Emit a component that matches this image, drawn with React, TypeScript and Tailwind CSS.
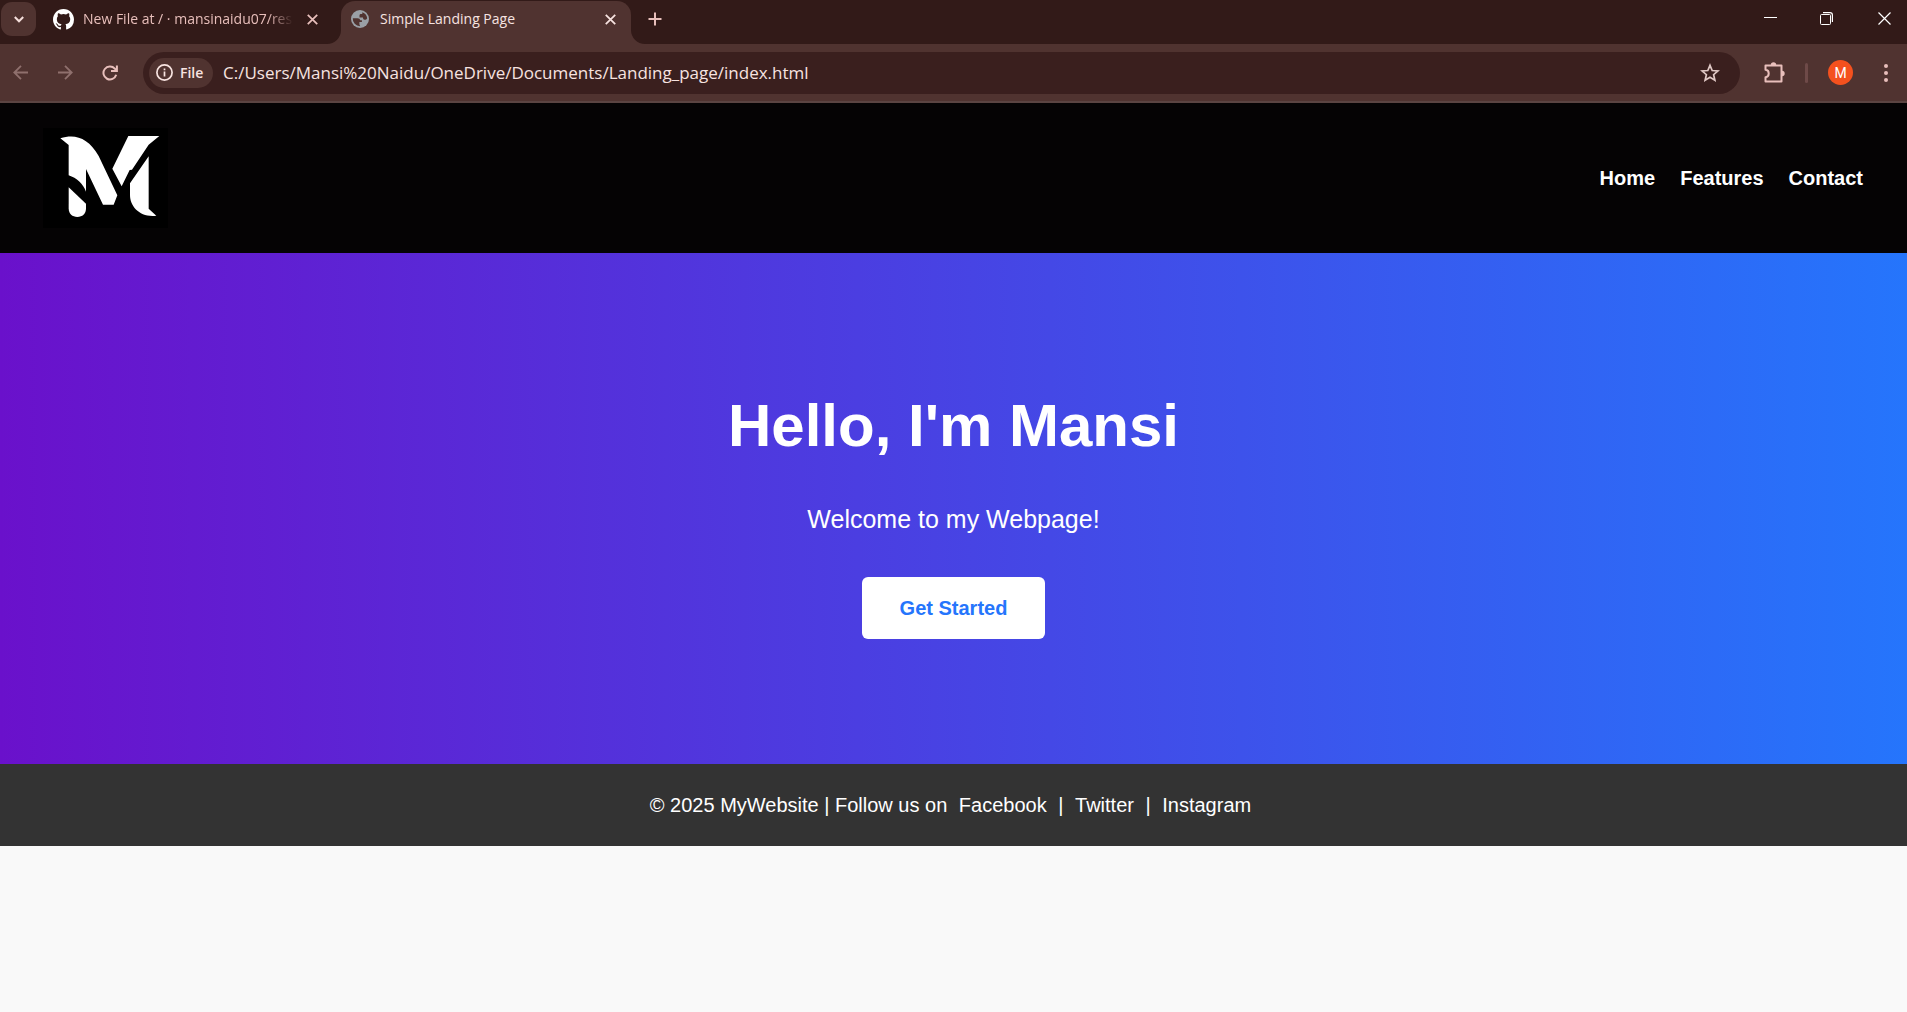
import type { ReactNode } from "react";

function Icon({ className, children, viewBox = "0 0 20 20" }: { className: string; children: ReactNode; viewBox?: string }) {
  return (
    <svg viewBox={viewBox} className={className} fill="none" stroke="currentColor" strokeWidth={2} aria-hidden="true">
      {children}
    </svg>
  );
}

function CloseIcon({ className }: { className: string }) {
  return (
    <Icon className={className} viewBox="0 0 10 10">
      <path d="M0.7 0.7 9.3 9.3M9.3 0.7 0.7 9.3" strokeWidth={1.6} />
    </Icon>
  );
}

function TabStrip() {
  return (
    <div className="flex h-11 items-start bg-[#321a18] text-sm">
      <button aria-label="Search tabs" className="mt-[2px] ml-px flex h-[34px] w-[35px] items-center justify-center rounded-[11px] bg-[#503330] text-[#f5dfdc]">
        <Icon className="h-[7px] w-[10px]" viewBox="0 0 10 7">
          <path d="M0.8 1 5 5.3 9.2 1" />
        </Icon>
      </button>

      <div className="ml-4 flex h-[38px] w-[289px] items-center text-[#e8bfbb]">
        <svg viewBox="0 0 16 16" className="ml-px h-[21px] w-[21px] shrink-0 text-white" fill="currentColor" aria-hidden="true">
          <path d="M8 0C3.58 0 0 3.58 0 8c0 3.54 2.29 6.53 5.47 7.59.4.07.55-.17.55-.38 0-.19-.01-.82-.01-1.49-2.01.37-2.53-.49-2.69-.94-.09-.23-.48-.94-.82-1.13-.28-.15-.68-.52-.01-.53.63-.01 1.08.58 1.23.82.72 1.21 1.87.87 2.33.66.07-.52.28-.87.51-1.07-1.78-.2-3.64-.89-3.64-3.95 0-.87.31-1.59.82-2.15-.08-.2-.36-1.02.08-2.12 0 0 .67-.21 2.2.82a7.6 7.6 0 0 1 4 0c1.53-1.04 2.2-.82 2.2-.82.44 1.1.16 1.92.08 2.12.51.56.82 1.27.82 2.15 0 3.07-1.87 3.75-3.65 3.95.29.25.54.73.54 1.48 0 1.07-.01 1.93-.01 2.2 0 .21.15.46.55.38A8.01 8.01 0 0 0 16 8c0-4.42-3.58-8-8-8z" />
        </svg>
        <span className="ml-[9px] w-[210px] whitespace-nowrap [mask-image:linear-gradient(to_right,black_88%,transparent)]">
          New File at / · mansinaidu07/res
        </span>
        <button aria-label="Close tab" className="ml-[14px]">
          <CloseIcon className="h-[11px] w-[11px]" />
        </button>
      </div>

      <div className="relative mt-px flex h-[43px] w-[290px] items-start rounded-t-[14px] bg-[#503330] text-[#f7e3e0]">
        <svg viewBox="0 0 14 14" className="absolute bottom-0 -left-[14px] h-[14px] w-[14px]" aria-hidden="true">
          <path d="M14 0V14H0A14 14 0 0 0 14 0Z" fill="#503330" />
        </svg>
        <svg viewBox="0 0 14 14" className="absolute -right-[14px] bottom-0 h-[14px] w-[14px]" aria-hidden="true">
          <path d="M0 0V14H14A14 14 0 0 1 0 0Z" fill="#503330" />
        </svg>
        <div className="flex h-[36px] w-full items-center pr-[15px] pl-[10px]">
          <svg viewBox="0 0 18 18" className="h-[18px] w-[18px]" aria-hidden="true">
            <circle cx="9" cy="9" r="9" fill="#9aa0a6" />
            <path d="M1.8 8.2H6.5C8.2 8.2 9.1 9 9.1 10.2H10.9V12H8.4V14.6L9.2 16.2A7.3 7.3 0 0 1 1.8 8.2ZM11.3 2.2A7.2 7.2 0 0 1 16.2 8.2C15.6 9.5 14.8 9.7 13.7 9.7 12 9.7 12 8.2 12 7.5H8.5V5.3C8.5 4.6 9.1 4 10 4H11.3Z" fill="#503330" />
          </svg>
          <span className="ml-[11px] flex-1 whitespace-nowrap">Simple Landing Page</span>
          <button aria-label="Close tab">
            <CloseIcon className="h-[11px] w-[11px]" />
          </button>
        </div>
      </div>

      <button aria-label="New tab" className="ml-[17px] flex h-[38px] w-[14px] items-center text-[#e8bfbb]">
        <Icon className="h-[14px] w-[14px]" viewBox="0 0 14 14">
          <path d="M7 0.5V13.5M0.5 7H13.5" />
        </Icon>
      </button>

      <div className="ml-auto flex h-[36px] items-center text-white">
        <button aria-label="Minimize" className="flex w-[57px] justify-center">
          <Icon className="h-[13px] w-[13px]" viewBox="0 0 13 13">
            <path d="M0 5.5H13" strokeWidth={1} />
          </Icon>
        </button>
        <button aria-label="Restore" className="flex w-[55px] justify-center">
          <Icon className="h-[13px] w-[13px]" viewBox="0 0 13 13">
            <rect x="0.5" y="2.5" width="10" height="10" rx="1" strokeWidth={1} />
            <path d="M3 0.6H10Q12.4 0.6 12.4 3V10" strokeWidth={1.2} />
          </Icon>
        </button>
        <button aria-label="Close window" className="flex w-[53px] pl-6">
          <Icon className="h-[13px] w-[13px]" viewBox="0 0 13 13">
            <path d="M0.5 0.5 12.5 12.5M12.5 0.5 0.5 12.5" strokeWidth={1.2} />
          </Icon>
        </button>
      </div>
    </div>
  );
}

function Toolbar() {
  return (
    <div className="flex h-[59px] items-center border-b-2 border-[#5b4442] bg-[#503330] pr-[15px] pl-[13px] text-[#e8bfbb]">
      <button aria-label="Back" className="text-[#8f706d]">
        <Icon className="h-[15px] w-[15px]" viewBox="0 0 15 15">
          <path d="M15 7.5H1.5M8 0.8 1.3 7.5 8 14.2" strokeWidth={1.8} />
        </Icon>
      </button>
      <button aria-label="Forward" className="ml-[30px] text-[#8f706d]">
        <Icon className="h-[15px] w-[15px]" viewBox="0 0 15 15">
          <path d="M0 7.5H13.5M7 0.8 13.7 7.5 7 14.2" strokeWidth={1.8} />
        </Icon>
      </button>
      <button aria-label="Reload" className="ml-[29px]">
        <Icon className="h-4 w-4" viewBox="0 0 16 16">
          <path d="M14.2 9.8A6.5 6.5 0 1 1 12.8 3.6L14.3 5.2" />
          <path d="M14.9 0.5V6H9" />
        </Icon>
      </button>

      <div className="ml-[25px] flex h-[42px] flex-1 items-center rounded-full bg-[#3a1f1e] pr-5 pl-[6px]">
        <button className="flex h-[30px] w-16 items-center rounded-full bg-[#503330] pl-[7px] text-sm font-semibold text-[#f7e3e0]">
          <Icon className="mr-[7px] h-[17px] w-[17px]" viewBox="0 0 17 17">
            <circle cx="8.5" cy="8.5" r="7.6" strokeWidth={1.7} />
            <path d="M8.5 7.5V12.5M8.5 4.5V6.2" strokeWidth={1.7} />
          </Icon>
          File
        </button>
        <input
          aria-label="Address"
          readOnly
          value="C:/Users/Mansi%20Naidu/OneDrive/Documents/Landing_page/index.html"
          className="ml-[10px] min-w-0 flex-1 bg-transparent text-[17px] text-[#f7e3e0] outline-none"
        />
        <button aria-label="Bookmark this page" className="text-[#e0c8c5]">
          <Icon className="h-5 w-5">
            <path d="M10 2.3 12.2 7.5 17.9 8 13.6 11.7 14.9 17.3 10 14.3 5.1 17.3 6.4 11.7 2.1 8 7.8 7.5Z" strokeWidth={1.7} />
          </Icon>
        </button>
      </div>

      <button aria-label="Extensions" className="ml-6">
        <Icon className="h-[21px] w-[21px]" viewBox="0 0 21 21">
          <path d="M1.5 3.5H17.5V19.5H1.5V15.2C5.8 14.8 5.8 8.2 1.5 7.8Z" strokeLinejoin="round" />
          <path d="M6.8 3A2.7 2.7 0 0 1 12.2 3ZM18 8.8A2.7 2.7 0 0 1 18 14.2Z" fill="currentColor" stroke="none" />
        </Icon>
      </button>
      <span className="ml-5 h-5 w-[3px] rounded-full bg-[#6e4a48]" />
      <button aria-label="Profile" className="ml-5 flex h-[25px] w-[25px] items-center justify-center rounded-full bg-[#f4511e] font-[Roboto] text-sm text-white">
        M
      </button>
      <button aria-label="Menu" className="ml-[26px] flex w-[13px] justify-center">
        <svg viewBox="0 0 4 18" className="h-[18px] w-1" fill="currentColor" aria-hidden="true">
          <circle cx="2" cy="2" r="2" />
          <circle cx="2" cy="9" r="2" />
          <circle cx="2" cy="16" r="2" />
        </svg>
      </button>
    </div>
  );
}

function Logo() {
  return (
    <svg viewBox="69 84 375 300" className="h-[100px] w-[125px] bg-black" fill="white" role="img" aria-label="Logo">
      <path d="M121 115C165 100 205 113 236 168L292 286 281 314H249L198 207V275C190 252 170 234 146 226V135Z" />
      <path d="M146 262 198 311V325C198 342 187 351 172 351 157 351 146 342 146 325Z" />
      <path d="M325 108H418L386 134 336 209 329 210 305 259 277 206Z" />
      <path d="M386 169V326L409 347C360 353 330 320 330 285V250Z" />
    </svg>
  );
}

export default function App() {
  return (
    <div className="min-h-screen bg-[#f9f9f9] font-['Liberation_Sans',Arial,sans-serif]">
      <div className="font-['Open_Sans','Segoe_UI',sans-serif]">
        <TabStrip />
        <Toolbar />
      </div>

      <header className="flex items-center justify-between bg-[#050304] py-[25px] pr-11 pl-[43px]">
        <Logo />
        <nav className="flex gap-[25px] text-xl font-bold text-white">
          <a href="#home">Home</a>
          <a href="#features">Features</a>
          <a href="#contact">Contact</a>
        </nav>
      </header>

      <main className="flex flex-col items-center bg-linear-to-r/srgb from-[#6a11cb] to-[#2575fc] pt-[138px] pb-[125px] text-white">
        <h1 className="text-[60px] leading-[70px] font-bold">Hello, I'm Mansi</h1>
        <p className="mt-[43px] text-[25px] leading-[30px]">Welcome to my Webpage!</p>
        <a href="#start" className="mt-[43px] rounded-md bg-white px-[38px] py-[19px] text-xl leading-6 font-bold text-[#2575fc]">
          Get Started
        </a>
      </main>

      <footer className="bg-[#333333] py-[27px] text-center text-xl leading-7 text-white">
        © 2025 MyWebsite | Follow us on{" "}
        <a href="#facebook" className="mx-[6px]">Facebook</a> |{" "}
        <a href="#twitter" className="mx-[6px]">Twitter</a> |{" "}
        <a href="#instagram" className="mx-[6px]">Instagram</a>
      </footer>
    </div>
  );
}
